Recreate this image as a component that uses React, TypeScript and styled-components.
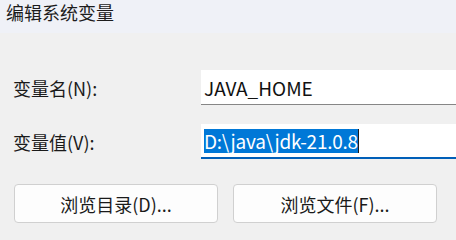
import React from "react";
import styled, { createGlobalStyle } from "styled-components";

const Global = createGlobalStyle`
  html, body { margin: 0; padding: 0; }
  body {
    width: 456px;
    height: 236px;
    overflow: hidden;
    background: #f0f0f0;
    font-family: "Noto Sans CJK SC", "Noto Sans", sans-serif;
    color: #1a1a1a;
  }
`;

const Window = styled.div`
  width: 456px;
  height: 236px;
  display: flex;
  flex-direction: column;
  overflow: hidden;
`;

const TitleBar = styled.div`
  height: 33px;
  flex: none;
  background: #eff1f7;
  padding-left: 6px;
  font-size: 18px;
  line-height: 24px;
  color: #1c1c1c;
  box-sizing: border-box;
`;

const Form = styled.div`
  display: grid;
  grid-template-columns: 188px 320px;
  row-gap: 19px;
  padding: 37px 0 0 13px;
  align-items: center;
`;

const Label = styled.div`
  font-size: 18px;
  line-height: 26px;
  color: #1a1a1a;
  white-space: nowrap;
`;

const Field = styled.div<{ $focused?: boolean }>`
  height: 35px;
  box-sizing: border-box;
  background: #ffffff;
  border-bottom: ${(p) => (p.$focused ? "2px solid #005fb8" : "1px solid #868686")};
  padding-left: 3px;
  display: flex;
  align-items: center;
  font-size: 19px;
  color: #111;
  white-space: nowrap;
`;

const Selected = styled.span`
  background: #0078d7;
  color: #ffffff;
  line-height: 24px;
  height: 24px;
  display: inline-block;
  letter-spacing: -0.25px;
`;

const Caret = styled.span`
  display: inline-block;
  width: 1px;
  height: 24px;
  background: #1a1a1a;
`;

const Buttons = styled.div`
  display: flex;
  gap: 15px;
  padding: 25px 0 0 14px;
`;

const Button = styled.button`
  width: 204px;
  height: 39px;
  box-sizing: border-box;
  background: #fdfdfd;
  border: 1px solid #d0d0d0;
  border-radius: 4px;
  font-family: "Noto Sans CJK SC", "Noto Sans", sans-serif;
  font-size: 18px;
  line-height: 26px;
  color: #1a1a1a;
  padding: 0;
`;

export default function App() {
  return (
    <>
      <Global />
      <Window>
        <TitleBar>编辑系统变量</TitleBar>
        <Form>
          <Label>变量名(N):</Label>
          <Field>JAVA_HOME</Field>
          <Label>变量值(V):</Label>
          <Field $focused>
            <Selected>D:\java\jdk-21.0.8</Selected>
            <Caret />
          </Field>
        </Form>
        <Buttons>
          <Button>浏览目录(D)...</Button>
          <Button>浏览文件(F)...</Button>
        </Buttons>
      </Window>
    </>
  );
}
